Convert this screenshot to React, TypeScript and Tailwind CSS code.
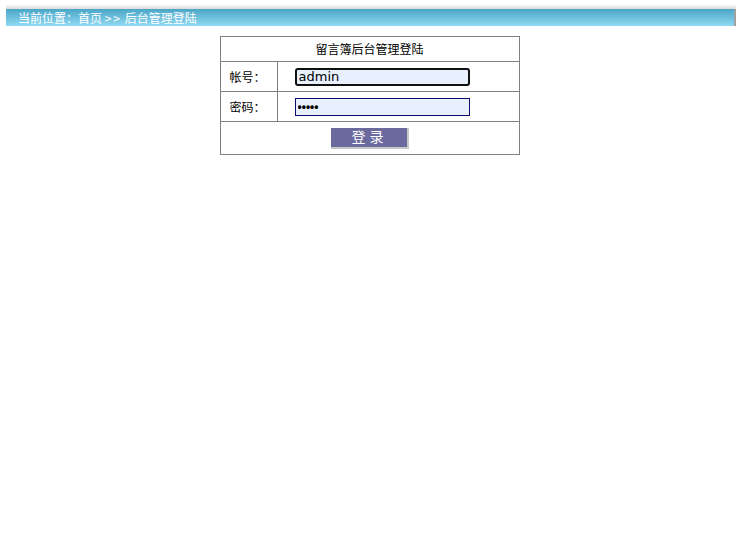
export default function App() {
  const font = { fontFamily: '"Noto Sans CJK SC", "Liberation Sans", sans-serif' };
  return (
    <div className="min-h-[540px] bg-white text-[12px] text-black" style={font}>
      <div className="pt-[5px] pl-[6px] pr-[4px]">
        <div className="h-[4px] bg-gradient-to-b from-[#f6f6f6] to-[#dcdcdc]" />
        <div className="flex h-[17px] items-center border-r-2 border-[#a0a0a0] bg-gradient-to-b from-[#4aa6c6] to-[#90daf2] pl-[12px] text-white leading-none whitespace-pre">
          当前位置：首页 <span className="tracking-[2px]">&gt;&gt;</span> 后台管理登陆
        </div>
      </div>
      <div className="mt-[10px] flex justify-center pr-[1px]">
        <table className="w-[300px] border-collapse border border-[#808080]">
          <tbody>
            <tr className="h-[25px]">
              <td colSpan={2} className="border border-[#808080] text-center">
                留言簿后台管理登陆
              </td>
            </tr>
            <tr className="h-[30px]">
              <td className="w-[57px] border border-[#808080] pl-[9px]">帐号：</td>
              <td className="border border-[#808080] pl-[17px]">
                <input
                  defaultValue="admin"
                  className="block h-[18px] w-[175px] rounded-[3px] border-2 border-[#111] bg-[#e8f0fe] px-[2px] text-[13px] text-black outline-none"
                  style={{ fontFamily: '"DejaVu Sans", sans-serif' }}
                />
              </td>
            </tr>
            <tr className="h-[30px]">
              <td className="border border-[#808080] pl-[9px]">密码：</td>
              <td className="border border-[#808080] pl-[17px]">
                <input
                  type="password"
                  defaultValue="admin"
                  className="block h-[18px] w-[175px] border border-[#0a0a6e] bg-[#e8f0fe] px-[2px] text-[12px] font-bold outline-none"
                  style={{ fontFamily: '"Liberation Sans", sans-serif' }}
                />
              </td>
            </tr>
            <tr className="h-[33px]">
              <td colSpan={2} className="border border-[#808080] text-center">
                <button className="inline-flex h-[21px] w-[78px] items-center justify-center border-b-2 border-r-2 border-[#c8c8c8] bg-[#6a6a9f] pb-[1px] pl-[2px] text-[14px] tracking-[4px] text-white">
                  登录
                </button>
              </td>
            </tr>
          </tbody>
        </table>
      </div>
    </div>
  );
}
